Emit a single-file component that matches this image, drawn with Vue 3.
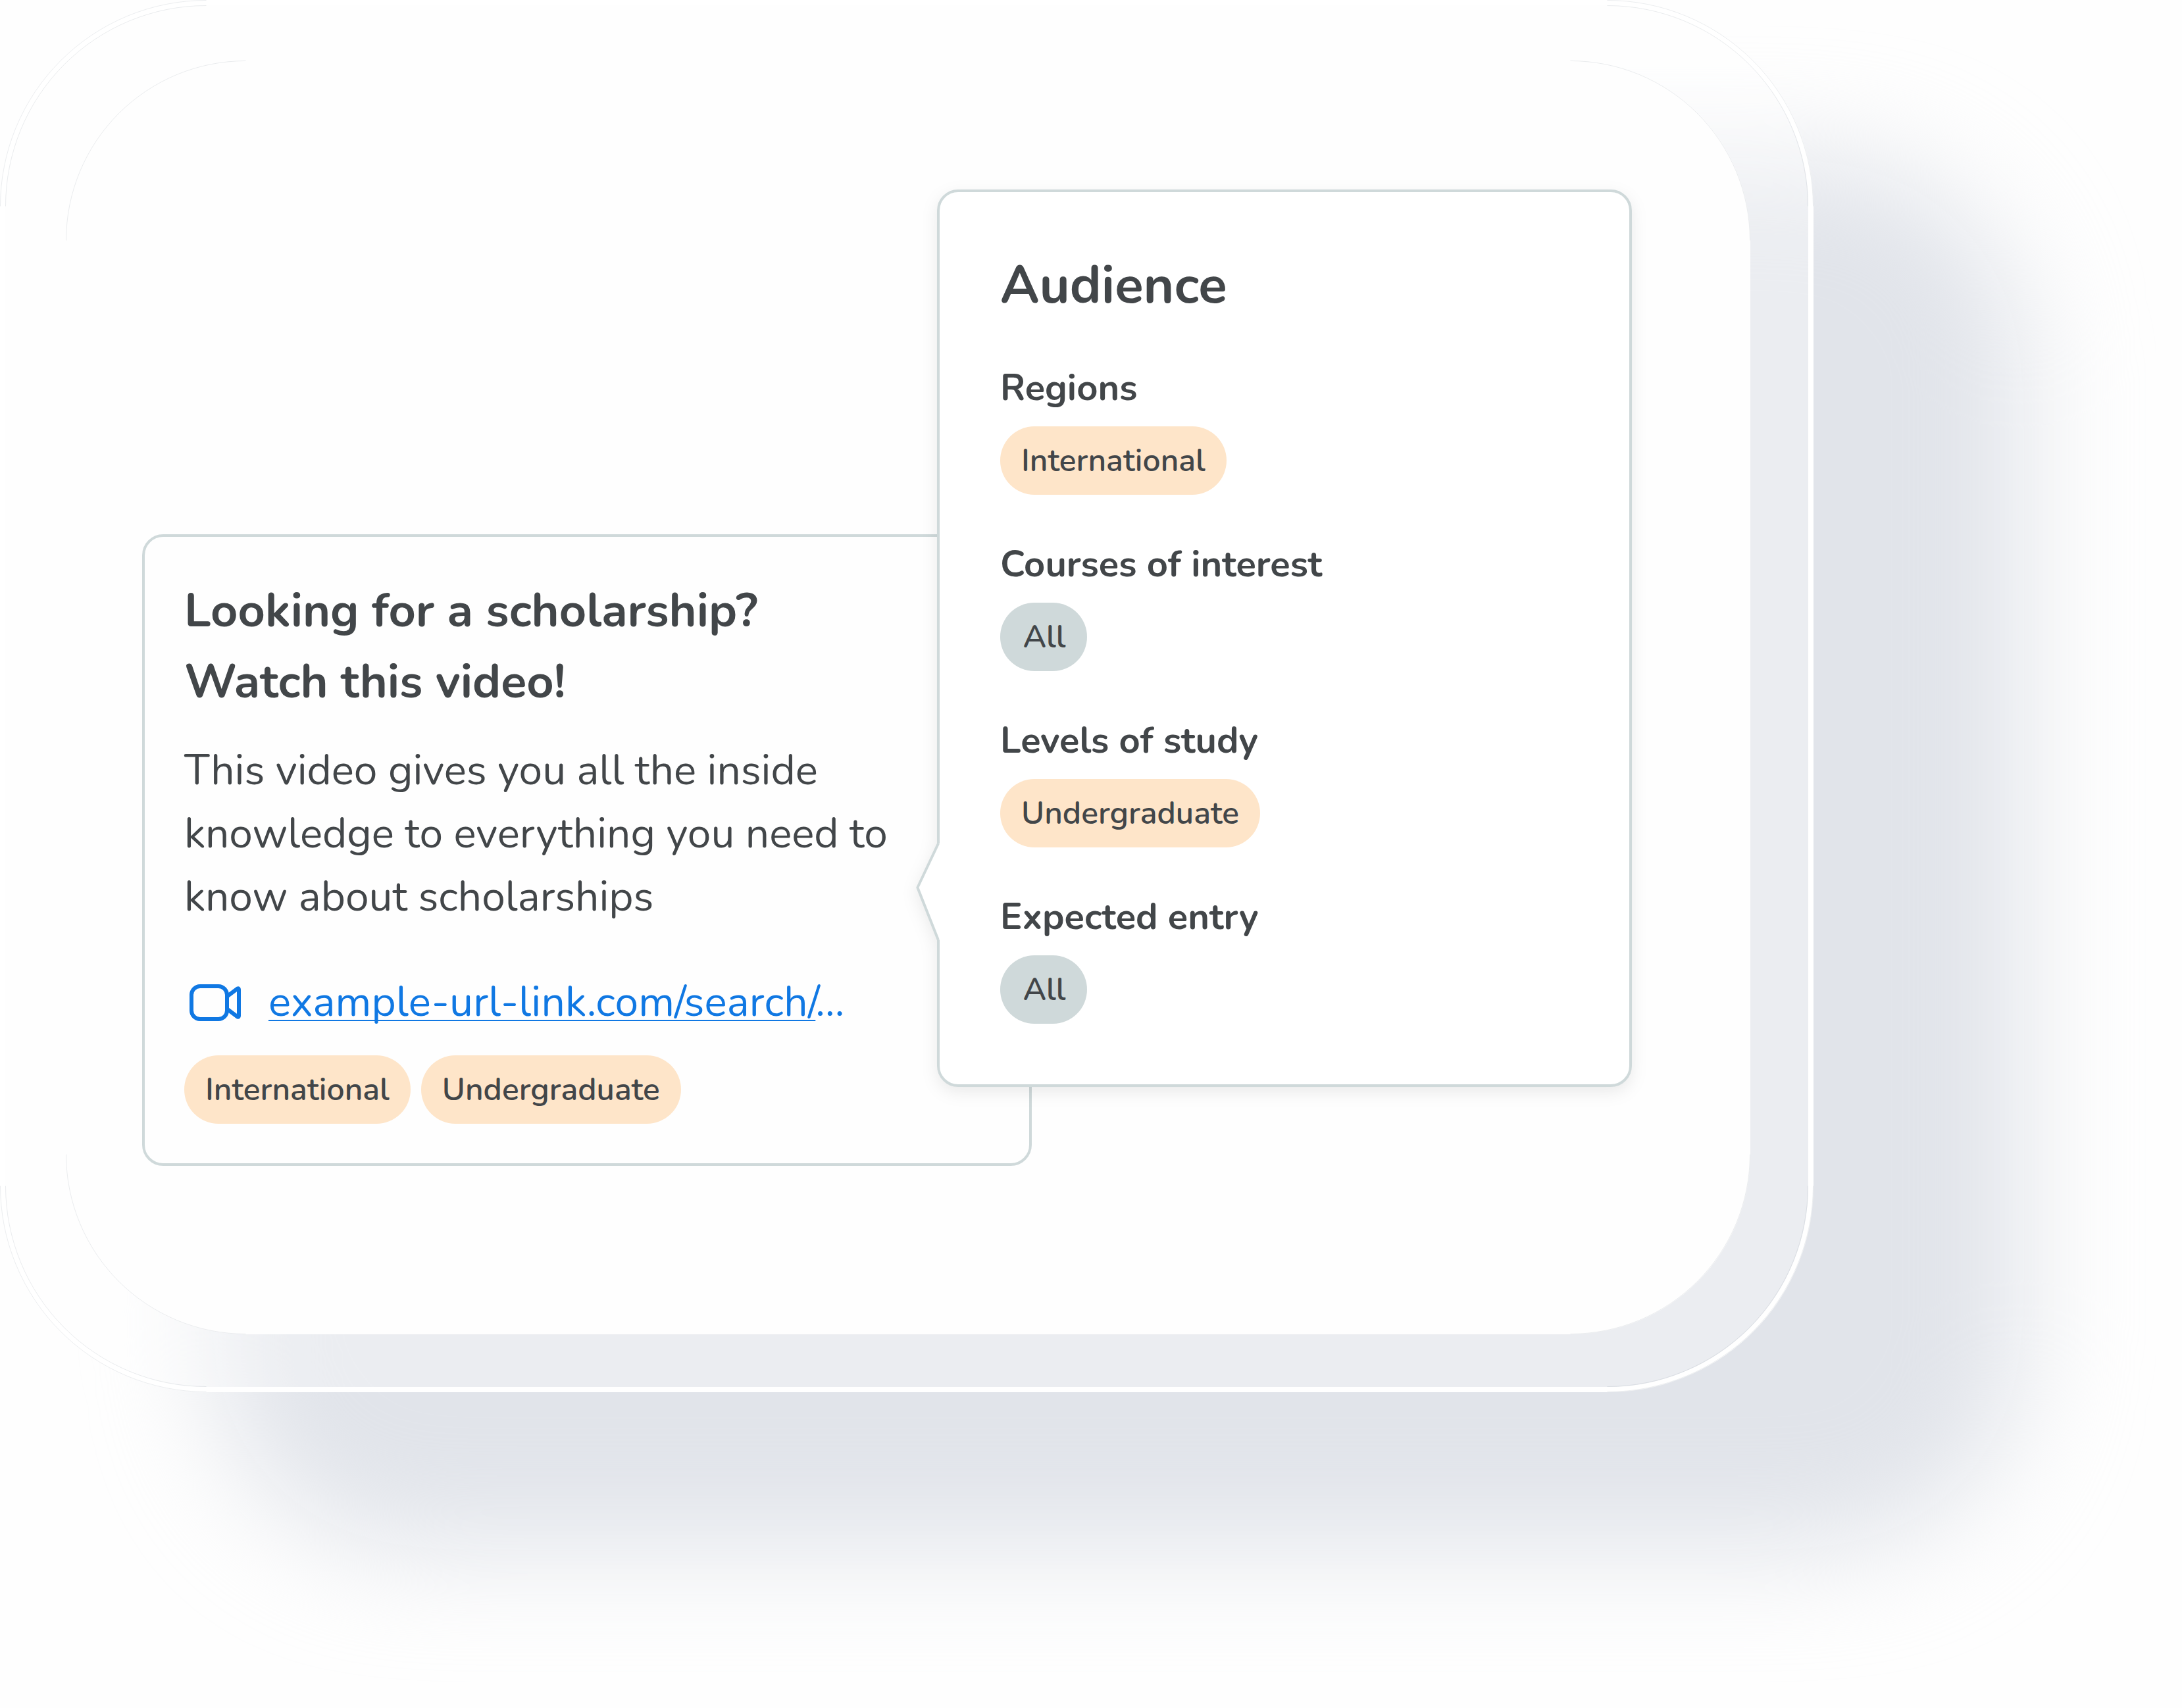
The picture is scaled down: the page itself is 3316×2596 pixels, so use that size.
<script setup>
const cardTags = ['International', 'Undergraduate']

const groups = [
  { label: 'Regions', value: 'International', tone: 'peach' },
  { label: 'Courses of interest', value: 'All', tone: 'grey' },
  { label: 'Levels of study', value: 'Undergraduate', tone: 'peach' },
  { label: 'Expected entry', value: 'All', tone: 'grey' }
]

// left, top, right, bottom, radius
const rings = [
  [0.5, 0.5, 2755.5, 2115.5, 313],
  [8.5, 8.5, 2747.5, 2107.5, 305],
  [100.5, 92.5, 2659.5, 2027.5, 273]
]

// only the rounded corners, the straight edges stay invisible
const corners = ([l, t, r, b, q]) =>
  `M${l} ${t + q}A${q} ${q} 0 0 1 ${l + q} ${t}` +
  `M${r - q} ${t}A${q} ${q} 0 0 1 ${r} ${t + q}` +
  `M${r} ${b - q}A${q} ${q} 0 0 1 ${r - q} ${b}` +
  `M${l + q} ${b}A${q} ${q} 0 0 1 ${l} ${b - q}`
</script>

<template>
  <div class="scene">
    <div class="frame">
      <main class="panel">
        <section class="card">
          <h2 class="card-title">Looking for a scholarship?<br>Watch this video!</h2>
          <p class="card-text">This video gives you all the inside<br>knowledge to everything you need to<br>know about scholarships</p>
          <div class="card-link">
            <svg class="icon" viewBox="0 0 96 96" fill="none" stroke="#1078e3" stroke-width="6" stroke-linejoin="round">
              <rect x="11" y="23" width="54" height="50" rx="13" />
              <path d="M65 38.5 L81 26.5 Q83 25.5 83 28 V68 Q83 70.5 81 69.5 L65 57.5" />
            </svg>
            <span class="link"><a>example-url-link.com/search/</a>...</span>
          </div>
          <div class="tags">
            <span v-for="tag in cardTags" :key="tag" class="tag peach">{{ tag }}</span>
          </div>
        </section>

        <aside class="popover">
          <svg class="notch" viewBox="0 0 36 148" width="36" height="148">
            <path d="M36 0 H34 L2 67 L34 147 H36 Z" fill="#fff" />
            <path d="M34 0 L2.4 67 L34 147" fill="none" stroke="#cfd9da" stroke-width="4" />
          </svg>
          <h1 class="popover-title">Audience</h1>
          <div v-for="group in groups" :key="group.label" class="group">
            <h3 class="group-label">{{ group.label }}</h3>
            <span :class="['tag', group.tone]">{{ group.value }}</span>
          </div>
        </aside>
      </main>
    </div>

    <svg class="hairlines" viewBox="0 0 2756 2116">
      <path v-for="ring in rings" :key="ring[4]" :d="corners(ring)" />
    </svg>
  </div>
</template>

<style>
body {
  margin: 0;
  background: #fff;
}
</style>

<style scoped>
.scene {
  position: relative;
  isolation: isolate;
  width: 3316px;
  height: 2596px;
  overflow: hidden;
  background: #fefefe;
  color: #424649;
  font-family: Nunito, Lato, sans-serif;
}

h1,
h2,
h3,
p {
  margin: 0;
}

.frame {
  position: relative;
  box-sizing: border-box;
  width: 2756px;
  height: 2116px;
  padding: 84px 88px 80px 92px;
  border: 8px solid #fff;
  border-radius: 313px;
  background: rgba(255, 255, 255, 0.34);
  background-clip: padding-box;
}

/* soft shadow, visible through the translucent frame */
.frame::before {
  content: '';
  position: absolute;
  z-index: -1;
  inset: -8px;
  border-radius: 313px;
  background: #e1e4ea;
  transform: translate(320px, 240px);
  filter: blur(84px);
}

.panel {
  box-sizing: border-box;
  display: flex;
  align-items: flex-start;
  height: 100%;
  padding-left: 116px;
  border-radius: 273px;
  background: #fefefe;
}

.card {
  box-sizing: border-box;
  flex: none;
  width: 1352px;
  height: 960px;
  margin-top: 720px;
  padding: 58px 60px 60px;
  border: 4px solid #cfd9da;
  border-radius: 32px;
  background: #fefefe;
}

.card-title {
  font-size: 72px;
  font-weight: 700;
  line-height: 108px;
}

.card-text {
  margin-top: 33px;
  font-size: 64px;
  line-height: 96px;
}

.card-link {
  display: flex;
  align-items: center;
  gap: 32px;
  margin-top: 65px;
}

.icon {
  flex: none;
  width: 96px;
  height: 96px;
}

.link {
  margin-bottom: 2px;
  color: #1078e3;
  font-size: 64px;
  line-height: 94px;
  letter-spacing: 0.18px;
}

.link a {
  text-decoration: underline;
  text-decoration-thickness: 2px;
  text-decoration-skip-ink: none;
  text-underline-offset: 6px;
}

.tags {
  display: flex;
  gap: 16px;
  margin-top: 32px;
}

.tag {
  box-sizing: border-box;
  display: inline-block;
  min-width: 132px;
  height: 104px;
  padding: 0 32px;
  border-radius: 52px;
  font-size: 48px;
  font-weight: 600;
  line-height: 104px;
  text-align: center;
}

.peach {
  background: #fee5c9;
}

.grey {
  background: #cfd9da;
  text-indent: 2px;
}

.popover {
  position: relative;
  box-sizing: border-box;
  flex: none;
  display: flex;
  flex-direction: column;
  gap: 64px;
  width: 1056px;
  height: 1364px;
  margin-top: 196px;
  margin-left: -144px;
  padding: 92px;
  border: 4px solid #cfd9da;
  border-radius: 32px;
  background: #fff;
  filter: drop-shadow(0 8px 12px rgba(0, 0, 0, 0.08));
}

.notch {
  position: absolute;
  top: 990px;
  left: -36px;
}

.popover-title {
  font-size: 80px;
  font-weight: 700;
  line-height: 100px;
}

.group {
  display: flex;
  flex-direction: column;
  align-items: flex-start;
  gap: 16px;
}

.group-label {
  font-size: 56px;
  font-weight: 700;
  line-height: 84px;
}

.hairlines {
  position: absolute;
  top: 0;
  left: 0;
  width: 2756px;
  height: 2116px;
  fill: none;
  stroke: rgba(110, 130, 140, 0.14);
  stroke-width: 1;
}
</style>
